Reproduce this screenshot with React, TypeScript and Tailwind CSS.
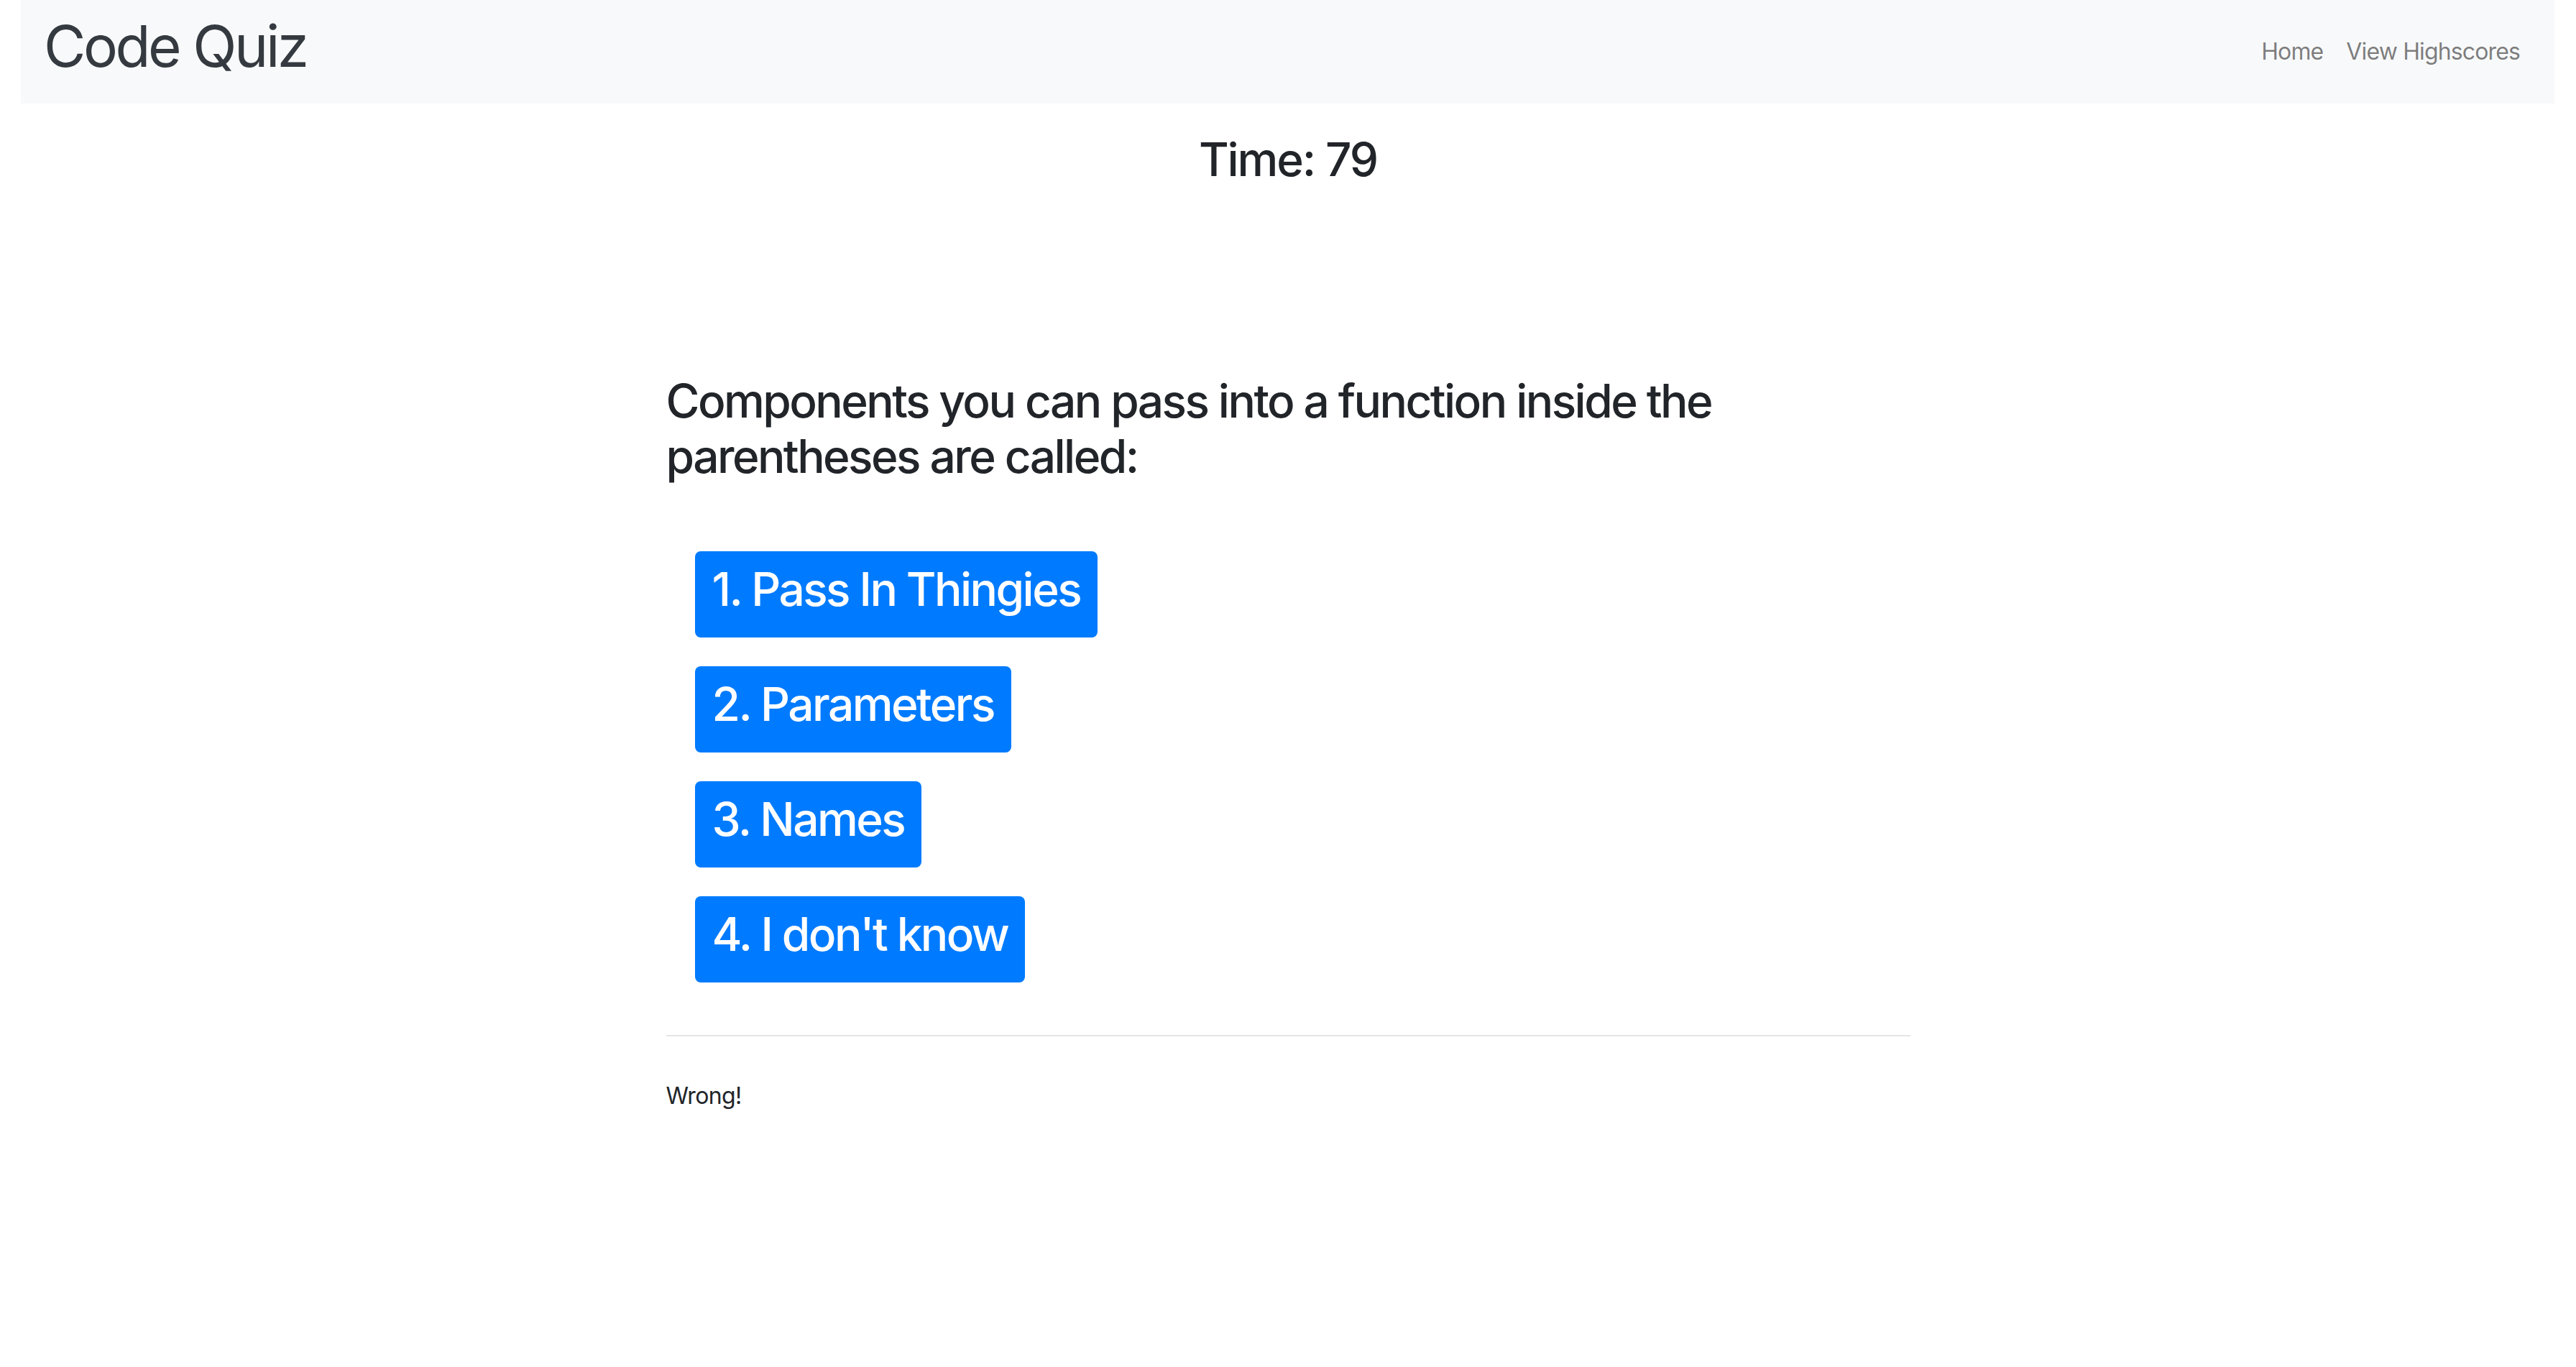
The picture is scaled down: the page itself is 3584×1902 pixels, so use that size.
const answers = ['1. Pass In Thingies', '2. Parameters', '3. Names', "4. I don't know"];

export default function App() {
  return (
    <div className="min-h-screen bg-white text-[#212529]" style={{ fontFamily: 'Inter, "Noto Sans", sans-serif' }}>
      <nav className="ml-[29px] mr-[30px] flex h-[144px] items-center justify-between bg-[#f8f9fa] px-8">
        <h1 className="mb-4 text-[80px] font-normal leading-[96px] tracking-[-0.043em] text-[#343a40]">Code Quiz</h1>
        <div className="flex text-[32px] leading-[48px] tracking-[-0.027em] text-black/50">
          <a className="px-4">Home</a>
          <a className="px-4">View Highscores</a>
        </div>
      </nav>

      <h2 className="mt-10 text-center text-[64px] font-medium leading-[76.8px] tracking-[-0.033em]">Time: 79</h2>

      <main className="mx-auto mt-[259px] w-[1731px]">
        <h2 className="text-[64px] font-medium leading-[76.8px] tracking-[-0.04em]">
          Components you can pass into a function inside the parentheses are called:
        </h2>
        <div className="ml-10 mt-[94px] flex flex-col items-start gap-10">
          {answers.map((a) => (
            <button
              key={a}
              className="rounded-lg bg-[#007bff] px-6 pt-[5px] pb-[19px] text-[64px] font-medium leading-[96px] tracking-[-0.04em] text-white"
            >
              {a}
            </button>
          ))}
        </div>
        <hr className="mt-[73px] border-t-2 border-black/10" />
        <p className="mt-[59px] text-[32px] leading-[48px] tracking-[-0.02em]">Wrong!</p>
      </main>
    </div>
  );
}
